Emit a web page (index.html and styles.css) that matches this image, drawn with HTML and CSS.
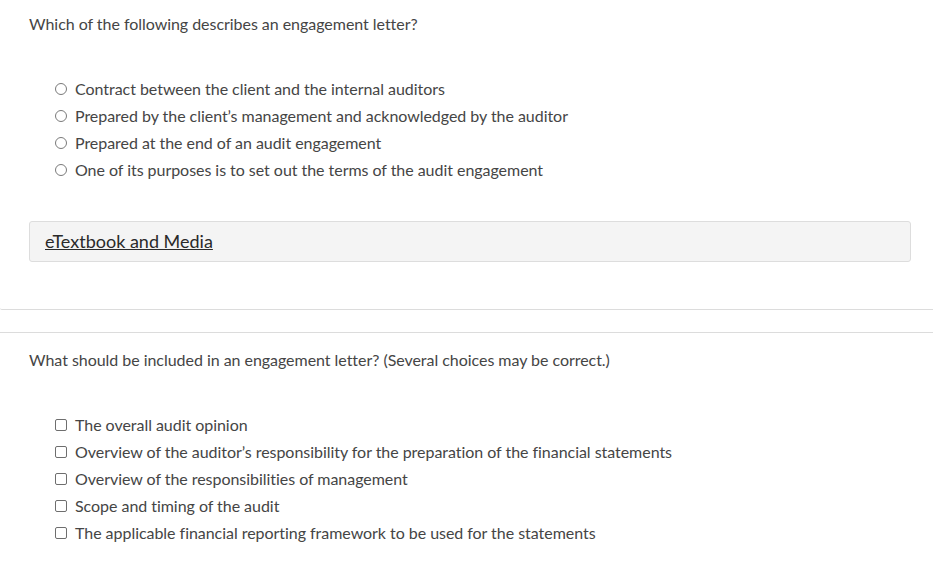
FILE: index.html
```html
<!DOCTYPE html>
<html>
<head>
<meta charset="utf-8">
<link rel="stylesheet" href="styles.css">
</head>
<body>
<div class="question first">
  <p class="prompt">Which of the following describes an engagement letter?</p>
  <ul class="options">
    <li><span class="radio"></span>Contract between the client and the internal auditors</li>
    <li><span class="radio"></span>Prepared by the client’s management and acknowledged by the auditor</li>
    <li><span class="radio"></span>Prepared at the end of an audit engagement</li>
    <li><span class="radio"></span>One of its purposes is to set out the terms of the audit engagement</li>
  </ul>
  <div class="media"><a href="#" class="media-link">eTextbook and Media</a></div>
</div>
<div class="question second">
  <p class="prompt">What should be included in an engagement letter? (Several choices may be correct.)</p>
  <ul class="options">
    <li><span class="check"></span>The overall audit opinion</li>
    <li><span class="check"></span>Overview of the auditor’s responsibility for the preparation of the financial statements</li>
    <li><span class="check"></span>Overview of the responsibilities of management</li>
    <li><span class="check"></span>Scope and timing of the audit</li>
    <li><span class="check"></span>The applicable financial reporting framework to be used for the statements</li>
  </ul>
</div>
</body>
</html>
```
FILE: styles.css
```css
html, body {
  margin: 0;
  padding: 0;
  background: #fff;
}
body {
  font-family: Lato, "Noto Sans", sans-serif;
  font-size: 16px;
  letter-spacing: -0.04px;
  color: #454545;
  overflow: hidden;
}
.question {
  padding: 0 22px 0 29px;
}
.first {
  padding-top: 15px;
  padding-bottom: 47px;
  border-bottom: 1px solid #dcdcdc;
  border-bottom-left-radius: 2px;
}
.second {
  border-top: 1px solid #dcdcdc;
  margin-top: 22px;
  padding-top: 18px;
}
.prompt {
  margin: 0;
  line-height: 18px;
}
.options {
  list-style: none;
  margin: 0;
  padding: 0 0 0 26px;
}
.first .options {
  margin-top: 42px;
}
.second .options {
  margin-top: 42px;
}
.options li {
  display: flex;
  align-items: center;
  height: 27px;
  line-height: 27px;
}
.radio {
  width: 10px;
  height: 10px;
  border: 1px solid #7a7a7a;
  border-radius: 50%;
  margin-right: 8px;
  flex: none;
}
.check {
  width: 10px;
  height: 10px;
  border: 1px solid #6e6e6e;
  border-radius: 2px;
  margin-right: 8px;
  flex: none;
}
.media {
  margin-top: 38px;
  height: 39px;
  background: #f4f4f4;
  border: 1px solid #dddddd;
  border-radius: 3px;
  display: flex;
  align-items: center;
  padding-left: 15px;
}
.media-link {
  color: #2a2a2a;
  text-decoration: underline;
  font-size: 18px;
  letter-spacing: 0;
  position: relative;
  top: -1px;
}
```
